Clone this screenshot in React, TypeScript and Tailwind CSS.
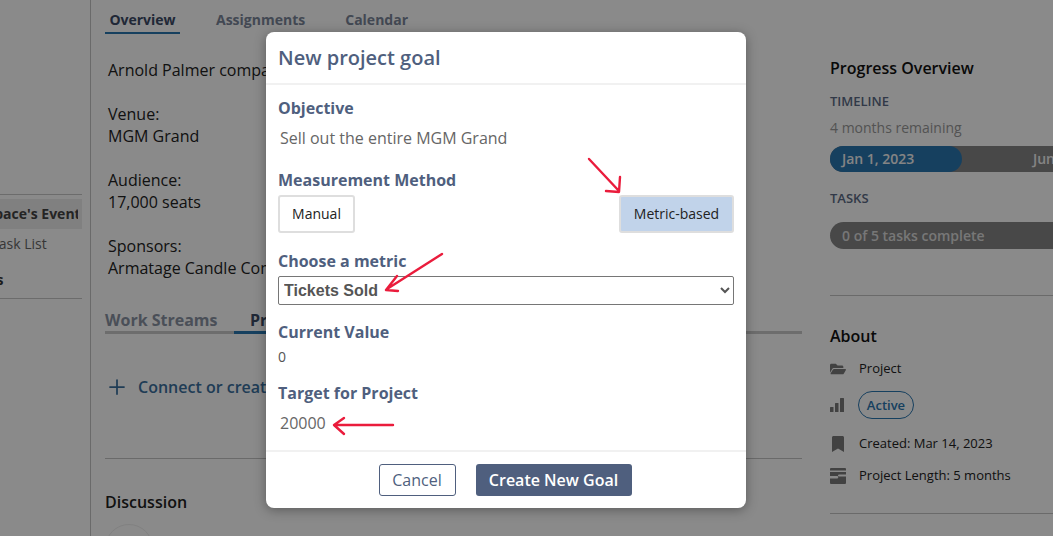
import { FaBookmark, FaFolderOpen } from "react-icons/fa";
import { Plus } from "lucide-react";

const Label = ({ children, className = "" }: { children: string; className?: string }) => (
  <div className={`text-base leading-[22px] font-bold text-[#4f5f7e] ${className}`}>{children}</div>
);

const Sidebar = () => (
  <div className="w-[91px] h-full shrink-0 border-r border-[#c4c4c4] pr-2 pt-[194px] overflow-hidden">
    <div className="border-y border-[#c8c8c8] h-[105px] pt-[4px]">
      <div className="h-[30px] bg-[#ececec] overflow-hidden text-sm leading-[30px] font-bold text-[#444] whitespace-nowrap">
        <span className="block -ml-[50px] w-[128px] overflow-hidden">Workspace's Events</span>
      </div>
      <div className="mt-[4px] text-sm leading-[22px] text-[#666] whitespace-nowrap -ml-[9px]">Task List</div>
      <div className="mt-[15px] text-sm leading-[20px] font-bold text-[#333] whitespace-nowrap -ml-[53px]">Settings</div>
    </div>
  </div>
);

const MainColumn = () => (
  <div className="w-[697px] ml-[14px] shrink-0 text-base text-[#222]">
    <div className="flex h-[34px] items-end text-sm font-bold">
      <div className="w-[75px] h-[34px] pt-[10px] leading-[20px] text-center border-b-2 border-[#2a76b0] text-[#3c4a66]">Overview</div>
      <div className="ml-[36px] pt-[10px] h-[34px] leading-[20px] text-[#7b8699]">Assignments</div>
      <div className="ml-[40px] pt-[10px] h-[34px] leading-[20px] text-[#7b8699]">Calendar</div>
    </div>
    <div className="pl-[3px] leading-[22px]">
      <p className="mt-[25px]">Arnold Palmer company</p>
      <p className="mt-[22px]">Venue:</p>
      <p>MGM Grand</p>
      <p className="mt-[22px]">Audience:</p>
      <p>17,000 seats</p>
      <p className="mt-[22px]">Sponsors:</p>
      <p>Armatage Candle Company</p>
    </div>
    <div className="mt-[30px] flex h-[25px] border-b-[3px] border-[#c9c9c9] font-bold text-[#8a93a3] leading-[22px] -mb-[1px]">
      <div className="w-[129px]">Work Streams</div>
      <div className="w-[120px] h-[25px] pl-[16px] border-b-[3px] border-[#2a76b0] text-[#3c4a66]">Projects</div>
    </div>
    <div className="mt-[42px] flex items-center text-[#3a6f9e] font-semibold leading-[24px]">
      <Plus size={24} strokeWidth={1.75} />
      <span className="ml-[9px]">Connect or create a project</span>
    </div>
    <div className="mt-[59px] border-t border-[#c4c4c4] pt-[32px] font-semibold leading-[22px] text-[#222]">Discussion</div>
    <div className="mt-[11px] w-[48px] h-[48px] rounded-full border border-[#eeeeee]" />
  </div>
);

const SignalIcon = () => (
  <svg width="14" height="14" viewBox="0 0 14 14" fill="#7a7a7a">
    <rect x="0" y="9" width="3.5" height="5" rx="0.5" />
    <rect x="5" y="5" width="3.5" height="9" rx="0.5" />
    <rect x="10" y="0" width="4" height="14" rx="0.5" />
  </svg>
);

const WalletIcon = () => (
  <svg width="16" height="16" viewBox="0 0 16 16" fill="#7a7a7a">
    <path d="M1 0h14a1 1 0 0 1 1 1v1.5H0V1a1 1 0 0 1 1-1z" />
    <path d="M0 4H16V6.5H9a1 1 0 0 0 0 2H16V15a1 1 0 0 1-1 1H1a1 1 0 0 1-1-1V10.5H7a1 1 0 0 0 0-2.5H0Z" />
  </svg>
);

const RightColumn = () => (
  <div className="ml-[28px] w-[260px] shrink-0 text-[#222]">
    <div className="mt-[57px] text-base leading-[22px] font-semibold text-[#111]">Progress Overview</div>
    <div className="mt-[12px] text-[13px] leading-[20px] font-semibold text-[#5b6a85]">TIMELINE</div>
    <div className="mt-[7px] text-sm leading-[20px] text-[#999]">4 months remaining</div>
    <div className="mt-[8px] h-[26px] w-[260px] rounded-full bg-[#858585] flex text-sm font-semibold leading-[26px] text-[#f4f4f4] whitespace-nowrap">
      <div className="w-[132px] shrink-0 h-[26px] pl-[12px] rounded-full bg-[#2a76b0]">Jan 1, 2023</div>
      <div className="ml-[71px]">Jun 1, 2023</div>
    </div>
    <div className="mt-[16px] text-[13px] leading-[20px] font-semibold text-[#5b6a85]">TASKS</div>
    <div className="mt-[14px] h-[27px] w-[260px] rounded-full bg-[#858585] pl-[12px] text-sm font-semibold leading-[27px] text-[#ddd]">
      0 of 5 tasks complete
    </div>
    <div className="mt-[46px] border-t border-[#c4c4c4] pt-[29px] text-base leading-[22px] font-semibold text-[#111]">About</div>
    <div className="mt-[12px] flex items-center h-[20px] text-[13px] text-[#222]">
      <FaFolderOpen size={16} color="#7a7a7a" />
      <span className="ml-[13px]">Project</span>
    </div>
    <div className="mt-[12px] flex items-center h-[28px] text-[13px]">
      <SignalIcon />
      <span className="ml-[14px] w-[56px] h-[28px] rounded-full border border-[#2a76b0] text-center leading-[26px] font-semibold text-[#2a76b0]">Active</span>
    </div>
    <div className="mt-[15px] flex items-center h-[20px] text-[13px]">
      <FaBookmark size={16} color="#7a7a7a" />
      <span className="ml-[13px]">Created: Mar 14, 2023</span>
    </div>
    <div className="mt-[12px] flex items-center h-[20px] text-[13px]">
      <WalletIcon />
      <span className="ml-[13px]">Project Length: 5 months</span>
    </div>
    <div className="mt-[27px] border-t border-[#c4c4c4]" />
  </div>
);

const Arrows = () => (
  <svg className="absolute left-0 top-0" width="480" height="476" viewBox="266 32 480 476" fill="none" stroke="#ea1c3c" strokeWidth="2.4" strokeLinecap="round" strokeLinejoin="round">
    <path d="M589 159 L619 191 M620 177 L619 192 L606 191" />
    <path d="M442 254 L387 289 M397 276 L386 290 L398 291" />
    <path d="M393 425 L335 425 M344 418 L334 425 L344 434" />
  </svg>
);

const GoalModal = () => (
  <div className="absolute left-[266px] top-[32px] w-[480px] h-[476px] bg-white rounded-lg shadow-[0_2px_12px_rgba(0,0,0,0.35)] flex flex-col">
    <div className="h-[53px] border-b-2 border-[#f1f1f1] px-3 pt-[12px] text-xl leading-[28px] font-semibold text-[#4f5f7e]">
      New project goal
    </div>
    <div className="flex-1 px-3">
      <Label className="mt-[12px]">Objective</Label>
      <div className="mt-[8px] pl-[2px] text-base leading-[22px] text-[#666]">Sell out the entire MGM Grand</div>
      <Label className="mt-[20px]">Measurement Method</Label>
      <div className="mt-[4px] flex justify-between text-sm">
        <button className="w-[77px] h-[38px] rounded-[3px] border-2 border-[#dedede] bg-white text-[#222]">Manual</button>
        <button className="w-[115px] h-[38px] rounded-[3px] border-2 border-[#dedede] bg-[#c1d3ea] text-[#222]">Metric-based</button>
      </div>
      <Label className="mt-[17px]">Choose a metric</Label>
      <select
        defaultValue="tickets"
        className="mt-[4px] block w-full h-[29px] rounded-[2px] border border-[#767676] bg-white pl-[1px] text-base font-bold text-[#555] font-['Liberation_Sans',Arial,sans-serif]"
      >
        <option value="tickets">Tickets Sold</option>
      </select>
      <Label className="mt-[16px]">Current Value</Label>
      <div className="mt-[4px] text-sm leading-[20px] text-[#555]">0</div>
      <Label className="mt-[15px]">Target for Project</Label>
      <div className="mt-[8px] pl-[2px] text-base leading-[22px] text-[#666]">20000</div>
    </div>
    <div className="h-[58px] border-t-2 border-[#f1f1f1] flex items-center justify-center gap-5 pr-[2px] text-base">
      <button className="w-[77px] h-[32px] rounded-[3px] border border-[#4f5f7e] text-[#4f5f7e]">Cancel</button>
      <button className="w-[156px] h-[32px] rounded-[3px] bg-[#4f5f7e] text-white font-semibold">Create New Goal</button>
    </div>
    <Arrows />
  </div>
);

const App = () => (
  <div className="relative w-[1053px] h-[536px] overflow-hidden bg-white font-['Open_Sans',sans-serif]">
    <div className="flex h-full">
      <Sidebar />
      <MainColumn />
      <RightColumn />
    </div>
    <div className="absolute inset-0 bg-black/[0.46]" />
    <GoalModal />
  </div>
);

export default App;
